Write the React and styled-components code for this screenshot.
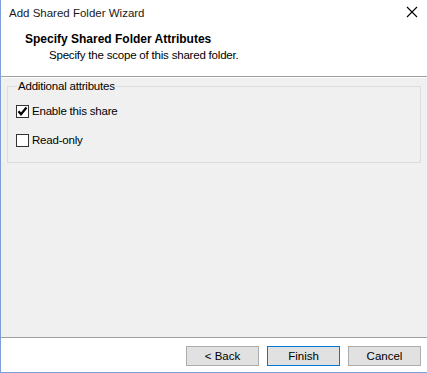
import styled, { createGlobalStyle } from "styled-components";

const Global = createGlobalStyle`
	html, body {
		margin: 0;
		padding: 0;
		background: #ffffff;
	}
	* {
		box-sizing: border-box;
	}
`;

const Window = styled.div`
	width: 427px;
	height: 373px;
	display: flex;
	flex-direction: column;
	background: #ffffff;
	border-left: 1px solid #7b9fd6;
	border-bottom: 1px solid #7b9fd6;
	font-family: "Liberation Sans", Arial, sans-serif;
	font-size: 11.5px;
	letter-spacing: -0.2px;
	color: #000000;
`;
const TitleBar = styled.div`
	height: 25px;
	display: flex;
	align-items: center;
	justify-content: space-between;
	padding: 0 9px 0 8px;
	flex-shrink: 0;
`;
const Caption = styled.span`
	font-size: 11.5px;
	letter-spacing: 0;
	color: #1a1a1a;
`;
const Close = styled.div`
	width: 12px;
	height: 12px;
	display: flex;
	margin-top: -1px;
`;
const Header = styled.div`
	height: 52px;
	padding: 6px 0 0 24px;
	flex-shrink: 0;
	border-bottom: 1px solid #a0a0a0;
`;
const Heading = styled.div`
	font-weight: bold;
	font-size: 12px;
	letter-spacing: 0;
	line-height: 16px;
`;
const Subtitle = styled.div`
	padding-left: 24px;
	line-height: 16px;
`;
const Body = styled.div`
	flex: 1;
	background: #f0f0f0;
	padding: 1px 6px 0 6px;
	border-top: 1px solid #ffffff;
	display: flex;
	flex-direction: column;
`;
const Group = styled.fieldset`
	margin: 0;
	padding: 9px 8px 8px 8px;
	height: 84px;
	border: 1px solid #dcdcdc;
	display: flex;
	flex-direction: column;
	gap: 13px;

	legend {
		padding: 0 1px;
		margin-left: 1px;
		line-height: 15px;
	}
`;
const Check = styled.label`
	display: flex;
	align-items: center;
	gap: 3px;
	height: 16px;
	cursor: default;
`;
const Box = styled.span`
	width: 13px;
	height: 13px;
	border: 1px solid #333333;
	background: #ffffff;
	display: flex;
	align-items: center;
	justify-content: center;
`;
const Spacer = styled.div`
	flex: 1;
`;
const Footer = styled.div`
	height: 35px;
	border-top: 1px solid #a0a0a0;
	box-shadow: inset 0 1px 0 #ffffff;
	display: flex;
	justify-content: flex-end;
	align-items: flex-start;
	padding: 8px 6px 0 0;
	gap: 8px;
	flex-shrink: 0;
`;
const Button = styled.div`
	width: 73px;
	height: 20px;
	display: flex;
	align-items: center;
	justify-content: center;
	background: #e1e1e1;
	border: 1px solid ${p => p.primary ? "#0078d7" : "#adadad"};
	box-shadow: ${p => p.primary ? "inset 0 0 0 1px #e1e1e1" : "none"};
	font-size: 11.5px;
	letter-spacing: 0;
`;

const CheckBox = ({ checked, children }) => (
	<Check>
		<Box>
			{checked ? (
				<svg width="11" height="11" viewBox="0 0 11 11">
					<path d="M1.5 5.2 L4 8.3 L9.5 1.5" fill="none" stroke="#000" strokeWidth="2.2" />
				</svg>
			) : null}
		</Box>
		{children}
	</Check>
);

const App = () => (
	<>
		<Global />
		<Window>
			<TitleBar>
				<Caption>Add Shared Folder Wizard</Caption>
				<Close>
					<svg width="12" height="12" viewBox="0 0 12 12">
						<path d="M1 1 L11 11 M11 1 L1 11" stroke="#000" strokeWidth="1.1" />
					</svg>
				</Close>
			</TitleBar>
			<Header>
				<Heading>Specify Shared Folder Attributes</Heading>
				<Subtitle>Specify the scope of this shared folder.</Subtitle>
			</Header>
			<Body>
				<Group>
					<legend>Additional attributes</legend>
					<CheckBox checked>Enable this share</CheckBox>
					<CheckBox>Read-only</CheckBox>
				</Group>
				<Spacer />
			</Body>
			<Footer>
				<Button>&lt; Back</Button>
				<Button primary>Finish</Button>
				<Button>Cancel</Button>
			</Footer>
		</Window>
	</>
);

export default App;
